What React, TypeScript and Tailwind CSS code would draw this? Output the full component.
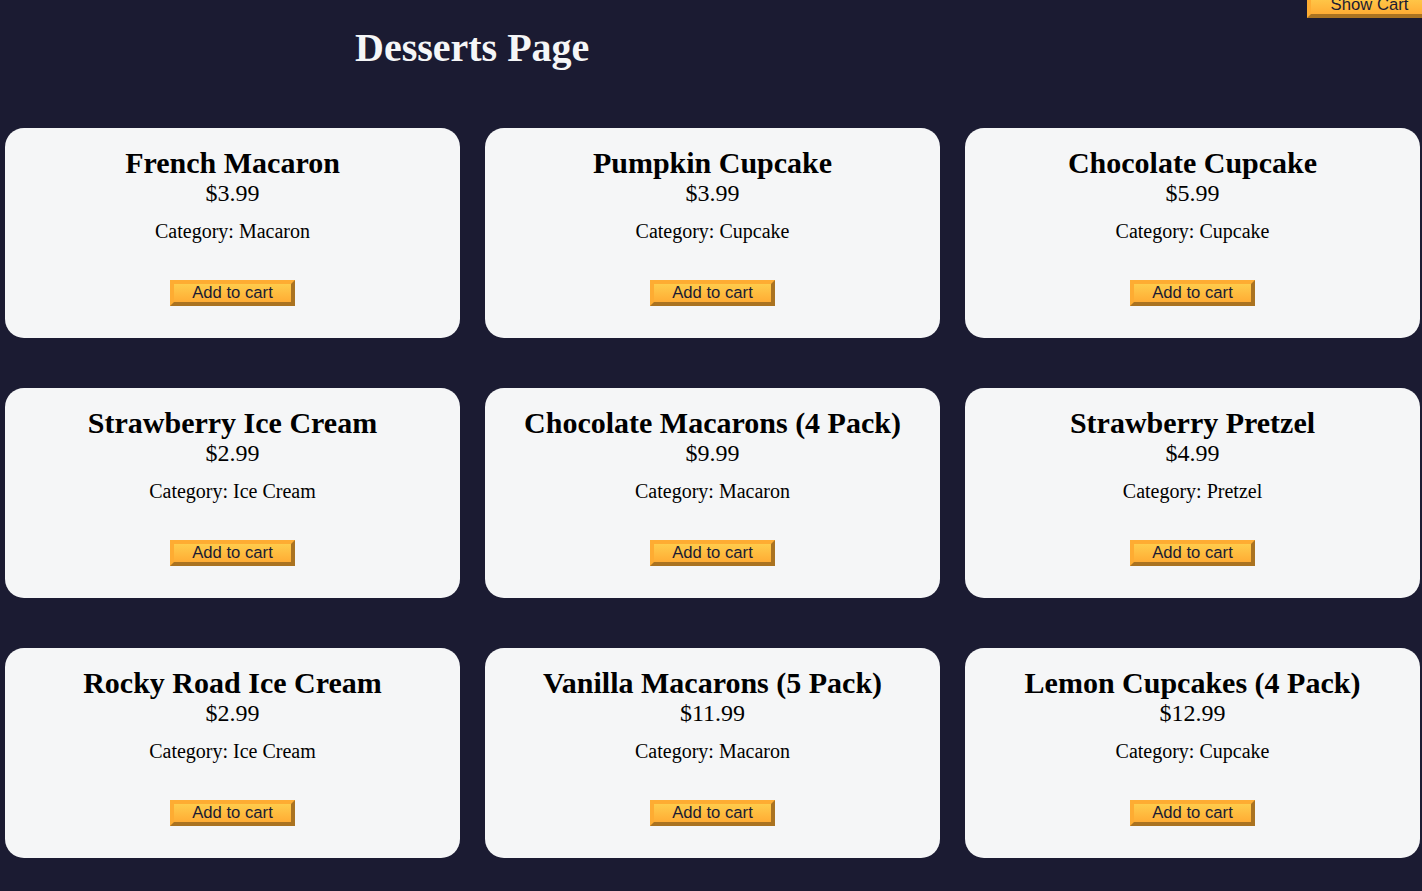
const desserts = [
  { name: "French Macaron", price: 3.99, category: "Macaron" },
  { name: "Pumpkin Cupcake", price: 3.99, category: "Cupcake" },
  { name: "Chocolate Cupcake", price: 5.99, category: "Cupcake" },
  { name: "Strawberry Ice Cream", price: 2.99, category: "Ice Cream" },
  { name: "Chocolate Macarons (4 Pack)", price: 9.99, category: "Macaron" },
  { name: "Strawberry Pretzel", price: 4.99, category: "Pretzel" },
  { name: "Rocky Road Ice Cream", price: 2.99, category: "Ice Cream" },
  { name: "Vanilla Macarons (5 Pack)", price: 11.99, category: "Macaron" },
  { name: "Lemon Cupcakes (4 Pack)", price: 12.99, category: "Cupcake" },
]

const btn =
  "h-[26px] border-[4px] [border-style:outset] border-[#feac32] bg-gradient-to-b from-[#fecc4c] to-[#ffac33] font-['Liberation_Sans',Arial,sans-serif] text-[16.67px] leading-[18px] text-[#1b1b32] cursor-pointer"

export default function App() {
  return (
    <div className="relative min-h-screen overflow-hidden bg-[#1b1b32] font-['Liberation_Serif','Times_New_Roman',serif] pb-[33px]">
      <button className={`${btn} absolute right-[-10px] top-[-8px] w-[125px]`}>Show Cart</button>

      <h1 className="pl-[355px] pt-[25px] text-[40px] leading-[46px] font-bold text-[#f5f6f7]">Desserts Page</h1>

      <div className="mt-[57px] ml-[5px] grid grid-cols-[455px_455px_455px] gap-x-[25px] gap-y-[50px]">
        {desserts.map((d) => (
          <div key={d.name} className="flex h-[210px] flex-col items-center rounded-[19px] bg-[#f5f6f7] pt-[18px] text-black">
            <h2 className="text-[30px] leading-[34px] font-bold">{d.name}</h2>
            <p className="text-[24px] leading-[27px]">${d.price}</p>
            <p className="mt-[13px] text-[20px] leading-[23px]">Category: {d.category}</p>
            <button className={`${btn} mt-[37px] w-[125px]`}>Add to cart</button>
          </div>
        ))}
      </div>
    </div>
  )
}
